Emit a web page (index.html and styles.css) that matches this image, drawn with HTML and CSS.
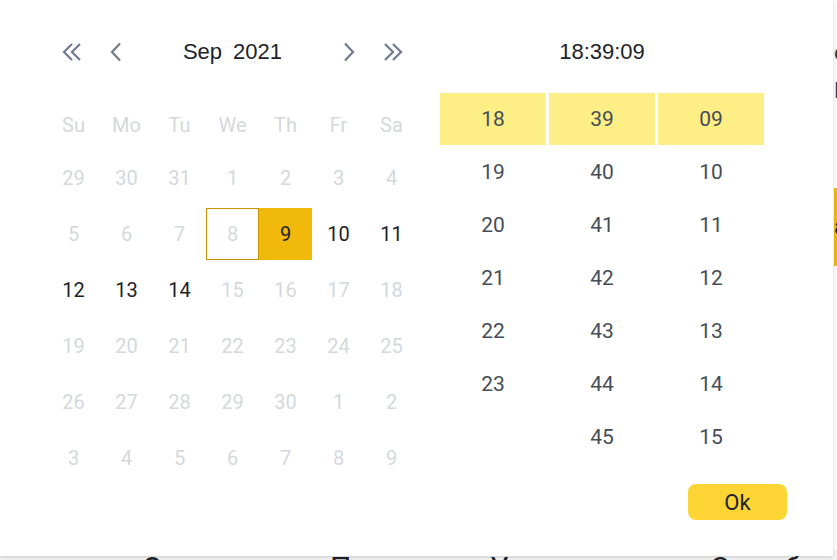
FILE: index.html
```html
<!DOCTYPE html>
<html lang="en">
<head>
    <meta charset="UTF-8">
    <title>Date Time Picker</title>
    <link rel="stylesheet" href="styles.css">
</head>
<body>
    <!-- page behind the popup -->
    <div class="page">
        <div class="side">
            <span class="side-line">e</span>
            <span class="side-line">LI</span>
            <div class="side-btn">a</div>
        </div>
        <nav class="nav">
            <a>О нас</a>
            <a>Продукты</a>
            <a>Услуги</a>
            <a>Служба</a>
        </nav>
    </div>

    <div class="picker">
        <div class="calendar">
            <div class="cal-head">
                <button class="arrow" title="Previous year">
                    <svg viewBox="0 0 24 24"><path d="M12 4 L4 12 L12 20 M20 4 L12 12 L20 20"/></svg>
                </button>
                <button class="arrow" title="Previous month">
                    <svg viewBox="0 0 24 24"><path d="M16 3.5 L8 12 L16 20.5"/></svg>
                </button>
                <div class="title"><span>Sep</span><span>2021</span></div>
                <button class="arrow" title="Next month">
                    <svg viewBox="0 0 24 24"><path d="M8 3.5 L16 12 L8 20.5"/></svg>
                </button>
                <button class="arrow" title="Next year">
                    <svg viewBox="0 0 24 24"><path d="M4 4 L12 12 L4 20 M12 4 L20 12 L12 20"/></svg>
                </button>
            </div>

            <div class="grid weekdays">
                <span>Su</span><span>Mo</span><span>Tu</span><span>We</span><span>Th</span><span>Fr</span><span>Sa</span>
            </div>

            <div class="grid days">
                <span class="off">29</span><span class="off">30</span><span class="off">31</span><span class="off">1</span><span class="off">2</span><span class="off">3</span><span class="off">4</span>
                <span class="off">5</span><span class="off">6</span><span class="off">7</span><span class="off today">8</span><span class="selected">9</span><span>10</span><span>11</span>
                <span>12</span><span>13</span><span>14</span><span class="off">15</span><span class="off">16</span><span class="off">17</span><span class="off">18</span>
                <span class="off">19</span><span class="off">20</span><span class="off">21</span><span class="off">22</span><span class="off">23</span><span class="off">24</span><span class="off">25</span>
                <span class="off">26</span><span class="off">27</span><span class="off">28</span><span class="off">29</span><span class="off">30</span><span class="off">1</span><span class="off">2</span>
                <span class="off">3</span><span class="off">4</span><span class="off">5</span><span class="off">6</span><span class="off">7</span><span class="off">8</span><span class="off">9</span>
            </div>
        </div>

        <div class="time">
            <div class="time-head">18:39:09</div>
            <div class="columns">
                <div class="col">
                    <span class="active">18</span><span>19</span><span>20</span><span>21</span><span>22</span><span>23</span>
                </div>
                <div class="col">
                    <span class="active">39</span><span>40</span><span>41</span><span>42</span><span>43</span><span>44</span><span>45</span>
                </div>
                <div class="col">
                    <span class="active">09</span><span>10</span><span>11</span><span>12</span><span>13</span><span>14</span><span>15</span>
                </div>
            </div>
            <div class="footer">
                <button class="ok">Ok</button>
            </div>
        </div>
    </div>
</body>
</html>
```

FILE: styles.css
```css
body {
    margin: 0;
    width: 837px;
    height: 560px;
    overflow: hidden;
    position: relative;
    background: #fff;
    font-family: Roboto, 'Liberation Sans', sans-serif;
    color: #1e2329;
}

button {
    font: inherit;
    border: none;
    background: none;
    padding: 0;
    cursor: pointer;
}

/* Page behind the popup */
.page {
    height: 560px;
    display: flex;
    flex-direction: column;
    background: #f3f3f3;
}

.side {
    box-sizing: border-box;
    height: 550px;
    flex-shrink: 0;
    padding: 40px 0 0 834px;
    display: flex;
    flex-direction: column;
    background: #fff;
    font-size: 22px;
    color: #2b3a55;
}

.side-line {
    height: 38px;
    white-space: nowrap;
}

.side-btn {
    margin-top: 72px;
    width: 80px;
    height: 78px;
    background: #f0b90b;
    color: #1e2329;
    line-height: 78px;
    white-space: nowrap;
}

.nav {
    display: flex;
    padding-left: 142px;
    font-size: 30px;
    line-height: 36px;
    color: #1e2329;
    white-space: nowrap;
}

.nav a:nth-child(1) { width: 188px; }
.nav a:nth-child(2) { width: 160px; }
.nav a:nth-child(3) { width: 220px; }

/* Popup */
.picker {
    position: absolute;
    left: 0;
    top: 0;
    width: 833px;
    height: 556px;
    background: #fff;
    box-shadow: 0 1px 4px rgba(0, 0, 0, 0.18);
    display: flex;
}

.calendar {
    width: 371px;
    padding: 28px 0 0 47px;
}

.cal-head {
    height: 48px;
    display: flex;
    align-items: center;
    padding: 0 13px;
    margin-bottom: 24px;
}

.arrow {
    width: 24px;
    height: 24px;
    margin-right: 20px;
}

.arrow:nth-last-child(-n+2) {
    margin-right: 0;
    margin-left: 20px;
}

.arrow svg {
    width: 24px;
    height: 24px;
    display: block;
    fill: none;
    stroke: #707a8a;
    stroke-width: 2.2;
}

.title {
    flex: 1;
    display: flex;
    justify-content: center;
    gap: 11px;
    font-family: 'Liberation Sans', Arial, sans-serif;
    font-size: 22px;
    color: #1e2329;
}

.grid {
    display: grid;
    grid-template-columns: repeat(7, 53px);
    text-align: center;
    font-size: 20px;
}

.weekdays span {
    height: 50px;
    line-height: 50px;
    color: #d5d8dd;
}

.days span {
    height: 52px;
    line-height: 52px;
    margin: 2px 0;
    box-sizing: border-box;
}

.days .off {
    color: #d5d8dd;
}

.days .today {
    border: 1px solid #c99400;
    line-height: 50px;
}

.days .selected {
    background: #f0b90b;
    color: #1e2329;
}

/* Time picker */
.time {
    width: 324px;
    margin-left: 22px;
    padding-top: 28px;
    display: flex;
    flex-direction: column;
    position: relative;
}

.time-head {
    height: 48px;
    line-height: 48px;
    text-align: center;
    font-family: 'Liberation Sans', Arial, sans-serif;
    font-size: 22px;
    color: #1e2329;
    margin-bottom: 17px;
}

.columns {
    display: flex;
    gap: 3px;
}

.col {
    flex: 1;
    display: flex;
    flex-direction: column;
    text-align: center;
    font-size: 21px;
    color: #474d57;
}

.col span {
    height: 53px;
    line-height: 53px;
}

.col .active {
    background: #fdef86;
    height: 52px;
    margin-bottom: 1px;
    line-height: 52px;
}

.footer {
    position: absolute;
    right: -23px;
    top: 484px;
}

.ok {
    width: 99px;
    height: 36px;
    border-radius: 8px;
    background: #fcd535;
    font-size: 22px;
    color: #1e2329;
}
```
